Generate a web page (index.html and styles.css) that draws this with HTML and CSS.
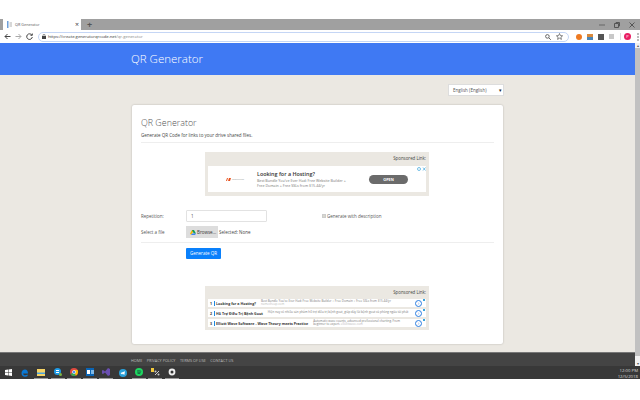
FILE: index.html
```html
<!DOCTYPE html>
<html lang="en">
<head>
  <meta charset="UTF-8">
  <title>QR Generator</title>
  <link rel="stylesheet" href="styles.css">
</head>
<body>
<div class="top-gap"></div>

<div class="tabstrip">
  <div class="tab">
    <svg class="tab-icon" width="5" height="7" viewBox="0 0 5 7"><rect x="0" y="0" width="1.500" height="7" fill="#6f9fd8"/><rect x="2.500" y="1" width="2.500" height="5" fill="#d8d8d8"/></svg>
    <span class="tab-title">QR Generator</span>
    <span class="tab-close">×</span>
  </div>
  <span class="new-tab">+</span>
  <div class="win-btns">
    <svg width="6" height="6" viewBox="0 0 6 6"><path d="M0 3h6" stroke="#666"/></svg>
    <svg width="6" height="6" viewBox="0 0 6 6"><path d="M.5 1.500h4v4h-4zM2 1V.5h3.500V4H5" fill="none" stroke="#555"/></svg>
    <svg width="6" height="6" viewBox="0 0 6 6"><path d="M.5.5l5 5M5.500.5l-5 5" stroke="#555"/></svg>
  </div>
</div>

<div class="toolbar">
  <svg class="nav" width="7" height="7" viewBox="0 0 7 7"><path d="M6.500 3.500H1M3.500 1L1 3.500 3.500 6" fill="none" stroke="#444"/></svg>
  <svg class="nav" width="7" height="7" viewBox="0 0 7 7"><path d="M.5 3.500H6M3.500 1L6 3.500 3.500 6" fill="none" stroke="#aaa"/></svg>
  <svg class="nav" width="7" height="7" viewBox="0 0 7 7"><path d="M5.800 2A2.800 2.800 0 1 0 6.300 4M6.300 .5V2.300H4.500" fill="none" stroke="#444"/></svg>
  <div class="omnibox">
    <svg width="4" height="5" viewBox="0 0 4 5"><path d="M1 2V1.200a1 1 0 0 1 2 0V2" fill="none" stroke="#444" stroke-width=".6"/><rect y="2" width="4" height="3" fill="#444"/></svg>
    <span class="url">https://create.generatorqrcode.net<span class="url-path">/qr-generator</span></span>
    <svg class="omni-end" width="6" height="6" viewBox="0 0 6 6"><circle cx="2.400" cy="2.400" r="1.800" fill="none" stroke="#666"/><path d="M3.800 3.800L5.800 5.800" stroke="#666"/></svg>
    <svg class="omni-star" width="7" height="7" viewBox="0 0 7 7"><path d="M3.500.5l.9 2.100 2.200.2-1.700 1.400.5 2.200-1.900-1.200-1.900 1.200.5-2.200L.4 2.800l2.200-.2z" fill="none" stroke="#666" stroke-width=".8"/></svg>
  </div>
  <div class="ext">
    <span class="ext-icon ext-orange"></span>
    <span class="ext-icon ext-multi"></span>
    <span class="ext-icon ext-dark"></span>
    <span class="ext-icon ext-gray"></span>
    <span class="ext-sep"></span>
    <span class="avatar">P</span>
    <svg class="menu-dots" width="2" height="8" viewBox="0 0 2 8"><circle cx="1" cy="1" r=".8" fill="#666"/><circle cx="1" cy="4" r=".8" fill="#666"/><circle cx="1" cy="7" r=".8" fill="#666"/></svg>
  </div>
</div>

<div class="viewport">
  <div class="page">
    <header class="site-head">
      <div class="site-title">QR Generator</div>
    </header>

    <main class="content">
      <div class="lang-row">
        <div class="lang-select">English (English)<span class="caret">▾</span></div>
      </div>

      <section class="card">
        <h1>QR Generator</h1>
        <p class="lead">Generate QR Code for links to your drive shared files.</p>
        <hr>

        <div class="ad ad-top">
          <div class="ad-label">Sponsored Link:</div>
          <div class="ad-banner">
            <div class="ad-logo">
              <svg width="5" height="3" viewBox="0 0 5 3"><path d="M0 3L1 0h1L1 3zM2 3l1-3h2L4 3z" fill="#e8501c"/></svg>
              <span class="ad-logo-text">namecheap</span>
            </div>
            <div class="ad-copy">
              <div class="ad-title">Looking for a Hosting?</div>
              <div class="ad-desc">Best Bundle You've Ever Had: Free Website Builder +<br>Free Domain + Free SSLs from $15.44/yr</div>
            </div>
            <div class="ad-open">OPEN</div>
            <svg class="ad-choice" width="9" height="4" viewBox="0 0 9 4"><circle cx="2" cy="2" r="1.500" fill="none" stroke="#3aa3dc" stroke-width=".7"/><path d="M6 .5l2.500 3M8.500.5L6 3.500" stroke="#3aa3dc" stroke-width=".7"/></svg>
          </div>
        </div>

        <div class="form-row">
          <label class="form-label">Repetition:</label>
          <div class="text-input">1</div>
          <div class="check-wrap"><span class="check"></span>Generate with description</div>
        </div>
        <div class="form-row file-row">
          <label class="form-label">Select a file</label>
          <div class="browse">
            <svg width="6" height="5" viewBox="0 0 6 5"><path d="M2 0h2L2 3.400 1 5 0 3.400z" fill="#f4b400"/><path d="M4 0l2 3.400H3.800L2 0z" fill="#0f9d58"/><path d="M1 5l1-1.600h4L5 5z" fill="#4285f4"/></svg>
            Browse...
          </div>
          <span class="selected">Selected: None</span>
        </div>
        <hr>
        <div class="submit-row"><button class="btn-primary">Generate QR</button></div>

        <div class="ad ad-bottom">
          <div class="ad-label">Sponsored Link:</div>
          <div class="link-rows">
            <div class="link-row">
              <span class="num">1</span><span class="link-title">Looking for a Hosting?</span>
              <span class="link-desc">Best Bundle You've Ever Had: Free Website Builder + Free Domain + Free SSLs from $15.44/yr<br><span class="link-url">namecheap.com</span></span>
              <span class="link-go">›</span><span class="link-mark"></span>
            </div>
            <div class="link-row">
              <span class="num">2</span><span class="link-title">Hỗ Trợ Điều Trị Bệnh Gout</span>
              <span class="link-desc">Hiện nay có nhiều sản phẩm hỗ trợ điều trị bệnh gout, giúp đẩy lùi bệnh gout và phòng ngừa tái phát</span>
              <span class="link-go">›</span><span class="link-mark"></span>
            </div>
            <div class="link-row">
              <span class="num">3</span><span class="link-title">Elliott Wave Software - Wave Theory meets Practice</span>
              <span class="link-desc">Automatic wave counts, advanced professional charting. From<br>beginner to expert. <span class="link-url">elliottwave.com</span></span>
              <span class="link-go">›</span><span class="link-mark"></span>
            </div>
          </div>
        </div>
      </section>
    </main>

    <footer class="site-foot">
      <a>HOME</a><a>PRIVACY POLICY</a><a>TERMS OF USE</a><a>CONTACT US</a>
    </footer>
  </div>
  <div class="scrollbar">
    <span class="sb-arrow">▴</span>
    <span class="sb-thumb"></span>
    <span class="sb-arrow">▾</span>
  </div>
</div>

<div class="taskbar">
  <svg class="start" width="7" height="7" viewBox="0 0 7 7"><path d="M0 1l3-.5V3.200H0zM3.500.4L7 0v3.200H3.500zM0 3.700h3v2.800L0 6zM3.500 3.700H7V7l-3.500-.5z" fill="#fff"/></svg>
  <span class="tb-item"><svg width="8" height="8" viewBox="0 0 8 8"><path d="M1 4.500h6C7 2 5.800.5 4 .5 2 .5.500 2.200.500 4.300.500 6.500 2 7.700 4 7.700c1 0 2-.3 2.600-.8V5.500C5.800 6 5 6.300 4.200 6.300 2.800 6.300 2.200 5.500 2.200 4.500M2.300 3.300h3.400" fill="#0a78d4"/></svg></span>
  <span class="tb-item open"><svg width="8" height="7" viewBox="0 0 8 7"><rect width="8" height="7" fill="#f6d365"/><rect y="3.500" width="8" height="1.500" fill="#4aa3df"/></svg></span>
  <span class="tb-item open"><svg width="8" height="8" viewBox="0 0 8 8"><circle cx="3.500" cy="3.500" r="3.500" fill="#1e9be8"/><path d="M2 2.500h3M2 4.500h3" stroke="#fff"/><circle cx="6.500" cy="6.500" r="1.500" fill="#7cb342"/></svg></span>
  <span class="tb-item open"><svg width="8" height="8" viewBox="0 0 8 8"><circle cx="4" cy="4" r="4" fill="#e04a3f"/><path d="M4 4L.5 6A4 4 0 0 0 6 7.500z" fill="#34a853"/><path d="M4 4l2 3.500A4 4 0 0 0 7.500 2H4z" fill="#fbbc05"/><circle cx="4" cy="4" r="1.600" fill="#4285f4" stroke="#fff" stroke-width=".6"/></svg></span>
  <span class="tb-item open"><svg width="8" height="8" viewBox="0 0 8 8"><rect width="8" height="8" fill="#0a64b4"/><rect x="1" y="2" width="3" height="4" fill="#fff"/><path d="M5 2h3v4H5z" fill="#7fb8e6"/></svg></span>
  <span class="tb-item open"><svg width="8" height="8" viewBox="0 0 8 8"><path d="M0 2.500l1-.5 2 1.500L6 0l2 1v6L6 8 3 4.500 1 6 0 5.500z" fill="#6a4fb0"/></svg></span>
  <span class="tb-item"><svg width="8" height="8" viewBox="0 0 8 8"><circle cx="4" cy="4" r="4" fill="#2aa1da"/><path d="M1.500 4L6 2.200 5.300 6 3.800 4.800 3 5.500z" fill="#fff"/></svg></span>
  <span class="tb-item open"><svg width="8" height="8" viewBox="0 0 8 8"><circle cx="4" cy="4" r="4" fill="#1ed760"/><path d="M2 3c1.500-.4 3-.3 4.200.4M2.300 4.300c1.200-.3 2.400-.2 3.400.4M2.600 5.500c1-.2 1.800-.1 2.600.3" fill="none" stroke="#123" stroke-width=".6"/></svg></span>
  <span class="tb-item open"><svg width="9" height="8" viewBox="0 0 9 8"><rect width="3" height="4" fill="#f3c93c"/><path d="M4 7l4-4" stroke="#ccc"/><circle cx="4.500" cy="3.500" r="1" fill="#ccc"/><circle cx="7.500" cy="6.500" r="1" fill="#ccc"/></svg></span>
  <span class="tb-item open"><svg width="8" height="8" viewBox="0 0 8 8"><circle cx="4" cy="4" r="3.400" fill="#eee"/><circle cx="4" cy="4" r="1.500" fill="#333"/></svg></span>
  <div class="clock">12:00 PM<br>12/5/2018</div>
</div>
</body>
</html>
```

FILE: styles.css
```css
* {
  box-sizing: border-box;
}
html, body {
  margin: 0;
  padding: 0;
  background: #fff;
  overflow: hidden;
}
body {
  width: 640px;
  height: 400px;
  font-family: "Open Sans", "Liberation Sans", sans-serif;
  color: #444;
}

/* browser chrome */
.top-gap {
  height: 19px;
}
.tabstrip {
  height: 11px;
  background: #a0a0a0;
  display: flex;
  align-items: flex-end;
}
.tab {
  width: 78px;
  height: 11px;
  margin-left: 3px;
  padding: 0 2px 0 4px;
  background: #fff;
  display: flex;
  align-items: center;
  gap: 3px;
}
.tab-title {
  font-size: 3.800px;
  color: #555;
  flex: 1;
}
.tab-close {
  font-size: 7px;
  line-height: 1;
  color: #444;
}
.new-tab {
  margin-left: 6px;
  font-size: 9px;
  line-height: 11px;
  font-weight: 700;
  color: #555;
}
.win-btns {
  margin-left: auto;
  height: 11px;
  padding-right: 5px;
  display: flex;
  align-items: center;
  gap: 9px;
}
.toolbar {
  height: 13px;
  background: #fff;
  display: flex;
  align-items: center;
  padding-left: 4px;
  gap: 4px;
}
.nav {
  flex: none;
}
.omnibox {
  width: 531px;
  height: 10px;
  margin-left: 1px;
  padding: 0 3px 0 3px;
  border: 1px solid #c5d6f5;
  border-radius: 6px;
  display: flex;
  align-items: center;
  gap: 2px;
}
.url {
  font-size: 4.200px;
  color: #333;
  flex: 1;
}
.url-path {
  color: #888;
}
.omni-end {
  margin-right: 3px;
}
.omni-star {
  margin-right: 2px;
}
.ext {
  margin-left: 3px;
  display: flex;
  align-items: center;
  gap: 5px;
}
.ext-icon {
  width: 6px;
  height: 6px;
}
.ext-orange {
  background: #ee7a22;
  border-radius: 50%;
}
.ext-multi {
  background: linear-gradient(#d98a3d 50%, #4a86b8 50%);
}
.ext-dark {
  background: #555;
}
.ext-gray {
  width: 5px;
  height: 5px;
  background: #c8c8c8;
}
.ext-sep {
  width: 1px;
  height: 7px;
  background: #ddd;
  margin: 0 -2px 0 1px;
}
.avatar {
  width: 7px;
  height: 7px;
  border-radius: 50%;
  background: #e91e63;
  color: #fff;
  font-size: 4px;
  line-height: 7px;
  text-align: center;
}
.menu-dots {
  margin-left: 1px;
}

/* page */
.viewport {
  height: 323px;
  display: flex;
}
.page {
  width: 635px;
  display: flex;
  flex-direction: column;
}
.scrollbar {
  width: 5px;
  background: #f1f1f1;
  display: flex;
  flex-direction: column;
  align-items: center;
  font-size: 4px;
  line-height: 5px;
  color: #555;
}
.sb-thumb {
  flex: 1;
  width: 100%;
  background: #c1c1c1;
  margin: 0 0 5px;
}
.sb-arrow {
  height: 5px;
}
.site-head {
  height: 32px;
  background: #3f79f3;
  padding-left: 131px;
}
.site-title {
  font-size: 11.500px;
  line-height: 32px;
  color: #fff;
  font-weight: 300;
}
.content {
  flex: 1;
  background: #ebe8e2;
  padding: 9px 132px 0 132px;
}
.lang-row {
  height: 21px;
  display: flex;
  justify-content: flex-end;
  margin-right: -1px;
}
.lang-select {
  width: 56px;
  height: 12px;
  background: #fff;
  border: 1px solid #ddd;
  font-size: 4.500px;
  line-height: 10px;
  padding-left: 4px;
  color: #555;
  position: relative;
}
.caret {
  position: absolute;
  right: 1px;
  top: 0;
  font-size: 5px;
  color: #222;
}
.card {
  width: 371px;
  height: 239px;
  background: #fff;
  border-radius: 2px;
  box-shadow: 0 0 2px rgba(0, 0, 0, .25);
  padding: 11px 9px 0;
}
.card h1 {
  margin: 0;
  font-size: 8.900px;
  line-height: 14px;
  font-weight: 300;
  color: #555;
}
.lead {
  margin: 1px 0 0;
  font-size: 4.500px;
  line-height: 8px;
  color: #444;
}
hr {
  margin: 3px 0 0;
  border: 0;
  border-top: 1px solid #eee;
}

/* sponsored boxes */
.ad {
  width: 224px;
  margin-left: 64px;
  background: #ebe8e2;
  padding: 0 3px;
}
.ad-label {
  height: 13px;
  font-size: 4.400px;
  line-height: 13px;
  text-align: right;
  color: #444;
}
.ad-top {
  height: 44px;
  margin-top: 9px;
}
.ad-top .ad-label {
  height: 14px;
}
.ad-banner {
  height: 26px;
  background: #fff;
  display: flex;
  align-items: center;
  position: relative;
}
.ad-logo {
  width: 49px;
  padding-left: 18px;
  display: flex;
  align-items: center;
  gap: 1px;
}
.ad-logo-text {
  font-size: 2.200px;
  color: #999;
}
.ad-copy {
  width: 95px;
  white-space: nowrap;
}
.ad-title {
  font-size: 5.400px;
  font-weight: 600;
  color: #333;
  line-height: 8px;
}
.ad-desc {
  font-size: 3.650px;
  line-height: 5px;
  color: #777;
}
.ad-open {
  width: 39px;
  height: 9px;
  margin-left: 17px;
  border-radius: 5px;
  background: #6b6b6b;
  color: #fff;
  font-size: 3.800px;
  font-weight: 700;
  line-height: 9px;
  text-align: center;
}
.ad-choice {
  position: absolute;
  top: 1px;
  right: 0;
}

/* form */
.form-row {
  display: flex;
  align-items: center;
  margin-top: 14px;
  height: 12px;
  font-size: 4.500px;
  color: #555;
}
.file-row {
  margin-top: 4px;
}
.form-label {
  width: 45px;
  flex: none;
}
.text-input {
  width: 81px;
  height: 12px;
  border: 1px solid #e2e2e2;
  border-radius: 1px;
  padding-left: 4px;
  line-height: 10px;
}
.check-wrap {
  margin-left: 55px;
  display: flex;
  align-items: center;
  gap: 1px;
}
.check {
  width: 4px;
  height: 4px;
  background: #d8d8d0;
  border: 1px solid #ccc;
}
.browse {
  width: 32px;
  height: 12px;
  background: #ddd;
  display: flex;
  align-items: center;
  gap: 1px;
  padding-left: 4px;
  color: #333;
}
.selected {
  margin-left: 1px;
  color: #444;
}
.file-row + hr {
  margin-top: 4px;
}
.submit-row {
  margin: 5px 0 0 45px;
}
.btn-primary {
  display: block;
  width: 35px;
  height: 11px;
  padding: 0;
  border: 0;
  border-radius: 1px;
  background: #0a80fb;
  color: #fff;
  font: 4.500px/11px "Open Sans", sans-serif;
}
.ad-bottom {
  height: 44px;
  margin-top: 27px;
}
.link-rows {
  display: flex;
  flex-direction: column;
  gap: 2px;
}
.link-row {
  height: 8px;
  background: #fff;
  display: flex;
  align-items: center;
  padding-left: 2px;
  white-space: nowrap;
}
.num {
  width: 5px;
  font-size: 3.600px;
  font-weight: 700;
  color: #333;
  border-right: 1px solid #1e88e5;
  line-height: 5px;
  margin-right: 1px;
}
.link-title {
  font-size: 3.600px;
  font-weight: 700;
  color: #333;
  margin-right: 5px;
}
.link-desc {
  flex: 1;
  min-width: 0;
  font-size: 3px;
  line-height: 3.500px;
  color: #777;
}
.link-url {
  color: #bbb;
}
.link-go {
  width: 7px;
  height: 7px;
  border: 1px solid #2a7de1;
  border-radius: 50%;
  margin-right: 1px;
  font-size: 5px;
  line-height: 4px;
  text-align: center;
  color: #2a7de1;
  flex: none;
}
.link-mark {
  width: 2px;
  height: 2px;
  margin-right: 1px;
  align-self: flex-start;
  background: #3aa3dc;
  flex: none;
}

/* footer and taskbar */
.site-foot {
  height: 14px;
  background: #444;
  border-top: 1px solid #777;
  padding: 1px 0 0 131px;
  display: flex;
  align-items: center;
  gap: 4.500px;
}
.site-foot a {
  font-size: 3.800px;
  color: #bbb;
}
.taskbar {
  height: 13px;
  background: #383838;
  display: flex;
  align-items: center;
  padding-left: 5px;
}
.start {
  margin-right: 6px;
}
.tb-item {
  width: 14px;
  height: 13px;
  margin-right: 2.300px;
  display: flex;
  align-items: center;
  justify-content: center;
}
.tb-item.open {
  border-bottom: 1px solid #999;
}
.clock {
  margin-left: auto;
  margin-right: 2px;
  font-size: 4.300px;
  line-height: 6px;
  text-align: right;
  color: #ddd;
}
```
